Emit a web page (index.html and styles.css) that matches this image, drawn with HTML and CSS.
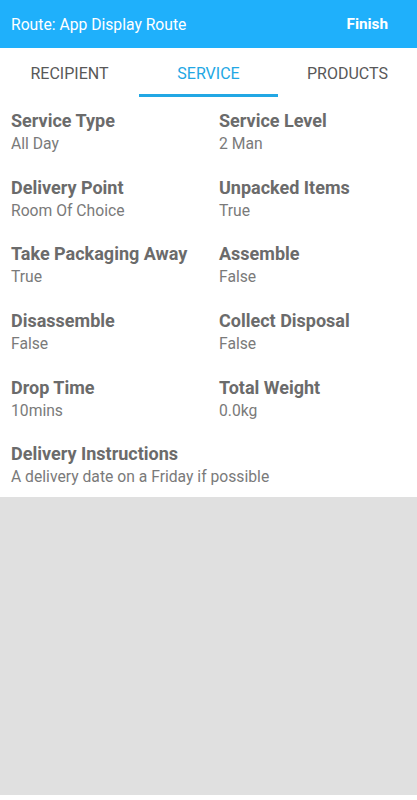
FILE: index.html
```html
<!DOCTYPE html>
<html>
<head>
<meta charset="utf-8">
<link rel="stylesheet" href="styles.css">
</head>
<body>
<div class="app">
  <header class="topbar">
    <span class="title">Route: App Display Route</span>
    <span class="finish">Finish</span>
  </header>
  <nav class="tabs">
    <div class="tab">RECIPIENT</div>
    <div class="tab active">SERVICE</div>
    <div class="tab">PRODUCTS</div>
  </nav>
  <section class="details">
    <div class="field"><div class="label">Service Type</div><div class="value">All Day</div></div>
    <div class="field"><div class="label">Service Level</div><div class="value">2 Man</div></div>
    <div class="field"><div class="label">Delivery Point</div><div class="value">Room Of Choice</div></div>
    <div class="field"><div class="label">Unpacked Items</div><div class="value">True</div></div>
    <div class="field"><div class="label">Take Packaging Away</div><div class="value">True</div></div>
    <div class="field"><div class="label">Assemble</div><div class="value">False</div></div>
    <div class="field"><div class="label">Disassemble</div><div class="value">False</div></div>
    <div class="field"><div class="label">Collect Disposal</div><div class="value">False</div></div>
    <div class="field"><div class="label">Drop Time</div><div class="value">10mins</div></div>
    <div class="field"><div class="label">Total Weight</div><div class="value">0.0kg</div></div>
    <div class="field wide"><div class="label">Delivery Instructions</div><div class="value">A delivery date on a Friday if possible</div></div>
  </section>
  <div class="filler"></div>
</div>
</body>
</html>
```
FILE: styles.css
```css
* { box-sizing: border-box; }
html, body { margin: 0; padding: 0; height: 100%; }
body { font-family: Roboto, "Liberation Sans", sans-serif; background: #fff; }
.app { display: flex; flex-direction: column; height: 800px; }
.topbar {
  height: 48px; background: #1fb0fb; color: #fff;
  display: flex; align-items: center; justify-content: space-between;
  padding: 0 29px 0 11px; flex: none;
}
.title { font-size: 15.7px; }
.finish { font-size: 15.3px; font-weight: bold; }
.tabs { display: grid; grid-template-columns: repeat(3, 1fr); height: 49px; flex: none; }
.tab {
  display: flex; align-items: center; justify-content: center;
  font-size: 16px; color: #585858; border-bottom: 3px solid transparent; padding-top: 4px;
}
.tab.active { color: #22a7e4; border-bottom-color: #22a7e4; }
.details {
  display: grid; grid-template-columns: 208px 1fr;
  padding: 13px 11px 0 11px; flex: none;
}
.field { height: 66.7px; }
.field.wide { grid-column: 1 / -1; height: 54px; }
.label { font-size: 18px; font-weight: bold; color: #6b6b6b; line-height: 22px; }
.value { font-size: 15.7px; color: #7a7a7a; line-height: 22px; margin-top: 1px; }
.filler { flex: 1; background: #e0e0e0; border-bottom: 5px solid #fff; }
```
